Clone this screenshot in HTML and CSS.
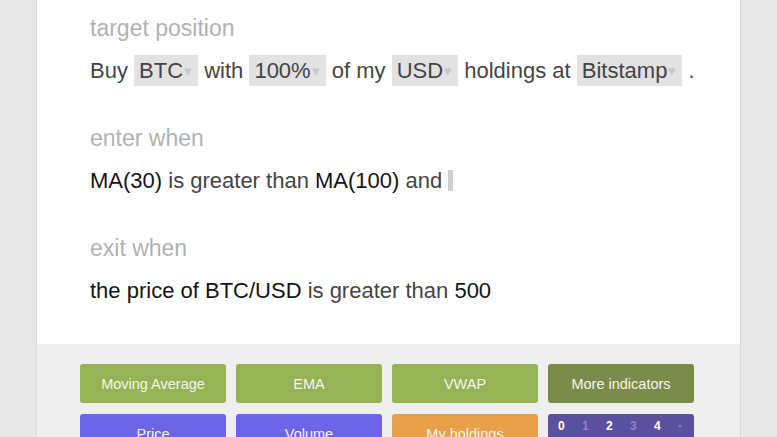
FILE: index.html
```html
<!DOCTYPE html>
<html lang="en">
  <head>
    <meta charset="UTF-8" />
    <meta name="viewport" content="width=device-width, initial-scale=1.0" />
    <title>Strategy</title>
    <link rel="stylesheet" href="styles.css">
  </head>
  <body>
    <div class="panel">
      <div class="rules">
        <div class="section">
          <div class="label">target position</div>
          <div class="line">
            Buy <span class="chip">BTC<span class="arrow">&#9662;</span></span>
            with <span class="chip">100%<span class="arrow">&#9662;</span></span>
            of my <span class="chip">USD<span class="arrow">&#9662;</span></span>
            holdings at <span class="chip">Bitstamp<span class="arrow">&#9662;</span></span>
            .
          </div>
        </div>

        <div class="section">
          <div class="label">enter when</div>
          <div class="line">
            <span class="term">MA(30)</span> is greater than
            <span class="term">MA(100)</span> and <span class="cursor"></span>
          </div>
        </div>

        <div class="section">
          <div class="label">exit when</div>
          <div class="line">
            <span class="term">the price of BTC/USD</span> is greater than
            <span class="term">500</span>
          </div>
        </div>
      </div>

      <div class="keyboard">
        <div class="key green">Moving Average</div>
        <div class="key green">EMA</div>
        <div class="key green">VWAP</div>
        <div class="key olive">More indicators</div>
        <div class="key purple">Price</div>
        <div class="key purple">Volume</div>
        <div class="key orange">My holdings</div>
        <div class="key numbers">
          <span class="on">0</span>
          <span>1</span>
          <span class="on">2</span>
          <span>3</span>
          <span class="on">4</span>
          <span>-</span>
        </div>
      </div>
    </div>
  </body>
</html>
```

FILE: styles.css
```css
body {
  font-family: "Liberation Sans", Arial, sans-serif;
  background-color: #e7e7e7;
  margin: 0;
  padding: 0;
  height: 437px;
  overflow: hidden;
}

.panel {
  margin-left: 36px;
  width: 703px;
  height: 437px;
  background-color: #fff;
  border-left: 1px solid #dadada;
  border-right: 1px solid #dadada;
  display: flex;
  flex-direction: column;
}

.rules {
  height: 344px;
  flex-shrink: 0;
  padding: 13px 0 0 53px;
  box-sizing: border-box;
}

.section {
  margin-bottom: 36px;
}

.label {
  font-size: 23px;
  line-height: 30px;
  color: #b2b2b2;
  margin-bottom: 12px;
}

.line {
  font-size: 22px;
  line-height: 32px;
  height: 32px;
  color: #454545;
  white-space: nowrap;
}

.chip {
  display: inline-block;
  background-color: #e2e2e2;
  line-height: 31px;
  padding: 0 6px 0 5px;
  color: #444;
}

.arrow {
  font-size: 15px;
  color: #c8c8c8;
  margin-left: 1px;
  vertical-align: 2px;
}

.term {
  color: #141414;
}

.cursor {
  display: inline-block;
  width: 5px;
  height: 21px;
  background-color: #cfcfcf;
  vertical-align: -3px;
}

.keyboard {
  flex: 1;
  background-color: #efefef;
  padding: 20px 0 0 43px;
  display: grid;
  grid-template-columns: repeat(4, 146px);
  grid-auto-rows: 39px;
  column-gap: 10px;
  row-gap: 11px;
}

.key {
  border-radius: 3px;
  color: #f4f6ee;
  font-size: 14.5px;
  display: flex;
  align-items: center;
  justify-content: center;
}

.green {
  background-color: #95b255;
}

.olive {
  background-color: #7b8b49;
}

.purple {
  background-color: #6d65e8;
}

.orange {
  background-color: #e8a14a;
}

.numbers {
  background-color: #5b4f9f;
  justify-content: flex-start;
  align-items: flex-start;
  padding: 5px 0 0 10px;
  font-size: 12px;
  font-weight: bold;
  color: #8c84c6;
}

.numbers span {
  flex-shrink: 0;
  width: 24px;
}

.numbers .on {
  color: #fff;
}
```
